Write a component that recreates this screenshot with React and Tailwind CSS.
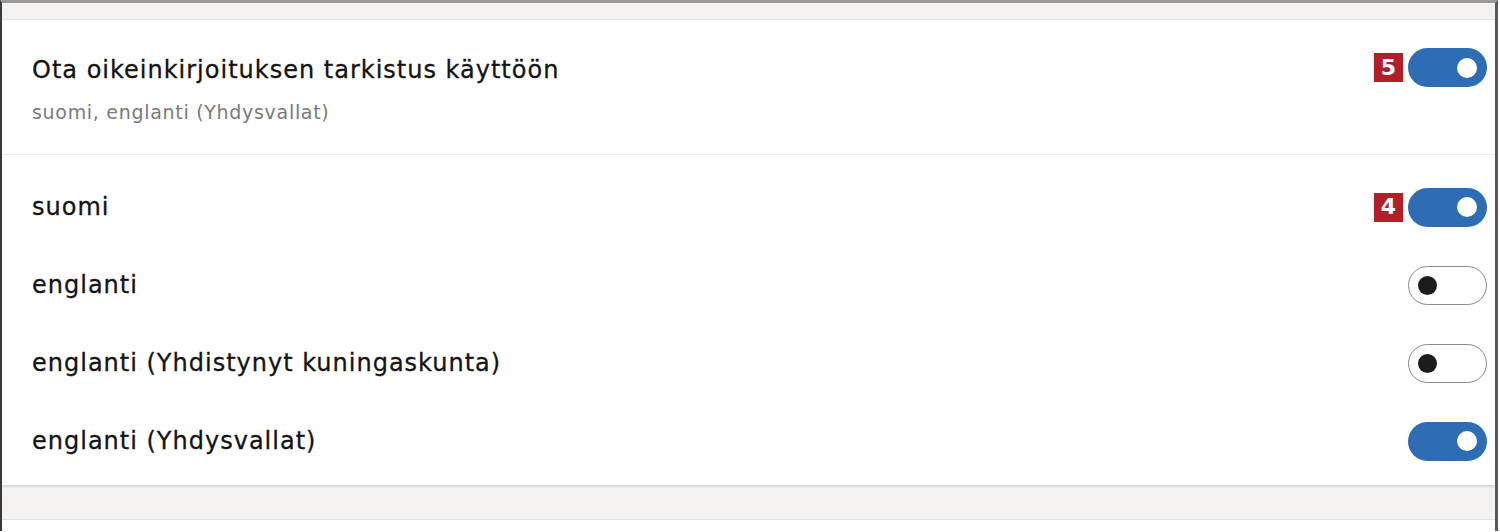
import React from "react";

function Toggle({ on }) {
  if (on) {
    return (
      <div className="w-[79px] h-[39px] rounded-full bg-[#2e6db3] flex items-center justify-end pr-[10px] shrink-0">
        <div className="w-[20px] h-[20px] rounded-full bg-white" />
      </div>
    );
  }
  return (
    <div className="w-[79px] h-[39px] rounded-full bg-white border-[1.5px] border-[#8a8a8a] flex items-center pl-[9px] shrink-0">
      <div className="w-[19px] h-[19px] rounded-full bg-[#1c1c1c]" />
    </div>
  );
}

function Badge({ n }) {
  return (
    <div className="w-[29px] h-[29px] bg-[#b31f29] text-white flex items-center justify-center text-[22px] font-bold leading-none shrink-0 font-['DejaVu_Sans',sans-serif]">
      {n}
    </div>
  );
}

function Row({ label, on, badge }) {
  return (
    <div className="h-[78px] flex items-center justify-between pl-[30px] pr-[8px]">
      <span className="text-[24px] tracking-[1px] text-[#141414] [-webkit-text-stroke:0.3px_#141414]">{label}</span>
      <div className="flex items-center gap-[5px]">
        {badge && <Badge n={badge} />}
        <Toggle on={on} />
      </div>
    </div>
  );
}

export default function App() {
  return (
    <div className="w-[1500px] h-[532px] bg-white font-['DejaVu_Sans',sans-serif]">
      <div className="w-[1498px] h-[531px] border-t-[3px] border-t-[#9a9a9a] border-l-2 border-l-[#3a3a3a] border-r-[3px] border-r-[#5a5a5a] bg-[#f4f3f2] flex flex-col">
        <div className="h-[17px] shrink-0 border-b border-[#e6e6e6]" />
        <div className="bg-white shrink-0 shadow-[0_2px_2px_rgba(0,0,0,0.12)]">
          <div className="h-[135px] flex justify-between pl-[30px] pr-[8px] pt-[33px] border-b border-[#ebebeb]">
            <div className="flex flex-col">
              <span className="text-[24px] leading-[34px] tracking-[1px] text-[#141414] [-webkit-text-stroke:0.3px_#141414]">
                Ota oikeinkirjoituksen tarkistus käyttöön
              </span>
              <span className="text-[19px] leading-[26px] mt-[12px] tracking-[0.7px] text-[#7a7a7a]">
                suomi, englanti (Yhdysvallat)
              </span>
            </div>
            <div className="flex items-center gap-[5px] h-[39px] -mt-[5px]">
              <Badge n="5" />
              <Toggle on />
            </div>
          </div>
          <div className="pt-[13px] pb-[5px]">
            <Row label="suomi" on badge="4" />
            <Row label="englanti" on={false} />
            <Row label="englanti (Yhdistynyt kuningaskunta)" on={false} />
            <Row label="englanti (Yhdysvallat)" on />
          </div>
        </div>
        <div className="h-[35px] shrink-0 border-b border-[#e2e2e2]" />
        <div className="flex-1 bg-white" />
      </div>
    </div>
  );
}
